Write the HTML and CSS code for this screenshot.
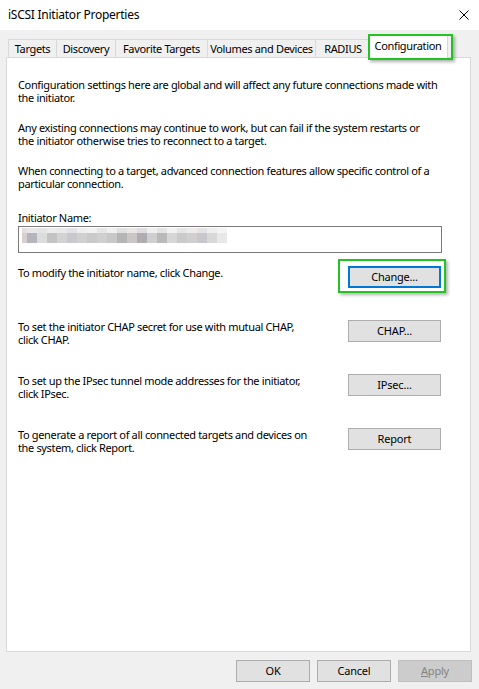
FILE: index.html
```html
<!DOCTYPE html>
<html lang="en">
<head>
<meta charset="utf-8">
<title>iSCSI Initiator Properties</title>
<link rel="stylesheet" href="styles.css">
</head>
<body>
<div class="window">
  <div class="titlebar">
    <span class="title">iSCSI Initiator Properties</span>
    <svg class="close" width="10" height="10" viewBox="0 0 10 10"><path d="M0.5 0.5 L9.5 9.5 M9.5 0.5 L0.5 9.5" stroke="#000" stroke-width="1" fill="none"/></svg>
  </div>
  <div class="tabs">
    <div class="tab tab-targets">Targets</div>
    <div class="tab tab-discovery">Discovery</div>
    <div class="tab tab-favorite">Favorite Targets</div>
    <div class="tab tab-volumes">Volumes and Devices</div>
    <div class="tab tab-radius">RADIUS</div>
    <div class="tab tab-config active">Configuration</div>
  </div>
  <div class="panel">
    <p class="para">Configuration settings here are global and will affect any future connections made with<br>the initiator.</p>
    <p class="para">Any existing connections may continue to work, but can fail if the system restarts or<br>the initiator otherwise tries to reconnect to a target.</p>
    <p class="para">When connecting to a target, advanced connection features allow specific control of a<br>particular connection.</p>
    <div class="label">Initiator Name:</div>
    <div class="namebox"><div class="blur"><div class="blur-top"></div><div class="blur-bottom"></div></div></div>
    <div class="row row-first">
      <p class="row-text">To modify the initiator name, click Change.</p>
      <button class="btn btn-default">Change...</button>
    </div>
    <div class="row">
      <p class="row-text">To set the initiator CHAP secret for use with mutual CHAP,<br>click CHAP.</p>
      <button class="btn">CHAP...</button>
    </div>
    <div class="row">
      <p class="row-text">To set up the IPsec tunnel mode addresses for the initiator,<br>click IPsec.</p>
      <button class="btn">IPsec...</button>
    </div>
    <div class="row">
      <p class="row-text">To generate a report of all connected targets and devices on<br>the system, click Report.</p>
      <button class="btn">Report</button>
    </div>
  </div>
  <div class="footer">
    <button class="btn btn-small">OK</button>
    <button class="btn btn-small">Cancel</button>
    <button class="btn btn-small btn-disabled"><u>A</u>pply</button>
  </div>
  <div class="highlight highlight-tab"></div>
  <div class="highlight highlight-change"></div>
</div>
</body>
</html>
```

FILE: styles.css
```css
* { box-sizing: border-box; }
html, body { margin: 0; padding: 0; }
body {
  width: 479px;
  height: 689px;
  background: #f0f0f0;
  font-family: "Noto Sans", "Open Sans", sans-serif;
  font-size: 11px;
  letter-spacing: -0.35px;
  color: #000;
  overflow: hidden;
}
.window {
  position: relative;
  width: 479px;
  height: 689px;
}
.titlebar {
  height: 30px;
  background: #fff;
  display: flex;
  align-items: center;
  justify-content: space-between;
  padding: 0 10px 0 8px;
}
.title { font-size: 12px; line-height: 16px; letter-spacing: -0.25px; }
.close { display: block; }

.tabs {
  display: flex;
  align-items: flex-end;
  height: 27px;
  padding-left: 8px;
  padding-top: 5px;
}
.tab {
  height: 18px;
  border: 1px solid #d9d9d9;
  border-bottom: none;
  border-right: none;
  background: #f0f0f0;
  display: flex;
  align-items: center;
  justify-content: center;
  line-height: 16px;
  white-space: nowrap;
}
.tab-targets { width: 48px; }
.tab-discovery { width: 59px; }
.tab-favorite { width: 92px; }
.tab-volumes { width: 108px; }
.tab-radius { width: 55px; }
.tab-config { width: 76px; }
.tab.active {
  position: relative;
  z-index: 1;
  height: 24px;
  margin: 0 -2px -1px -2px;
  width: 80px;
  background: #fff;
  border-right: 1px solid #d9d9d9;
  padding-bottom: 1px;
}

.panel {
  margin-left: 6px;
  width: 465px;
  height: 595px;
  background: #fff;
  border: 1px solid #d9d9d9;
  padding: 20px 0 0 11px;
}
.para {
  margin: 0 0 17px 0;
  line-height: 13px;
  white-space: nowrap;
}
.label {
  margin-top: 21px;
  line-height: 13px;
}
.namebox {
  margin-top: 2px;
  width: 424px;
  height: 27px;
  border: 1px solid #7a7a7a;
  background: #fff;
  padding: 1px 0 0 3px;
}
.blur { width: 205px; }
.blur-top {
  height: 5px;
  background: linear-gradient(to right,
    #e6dede 0 5px, #e8e8ec 5px 15px, #e4e4e4 15px 25px, #ececec 25px 35px, #e9e9e9 35px 45px,
    #e2e2e6 45px 55px, #eeeeee 55px 65px, #f2f2f2 65px 75px, #e6e6e6 75px 85px, #f0f0f0 85px 95px,
    #e1e1e1 95px 105px, #ebe6e6 105px 115px, #dedee2 115px 125px, #efefef 125px 135px, #e4e4e4 135px 145px,
    #f2f2f2 145px 155px, #e6e6e6 155px 165px, #f1eaea 165px 175px, #e3e3e8 175px 185px, #eeeeee 185px 195px, #f4f4f4 195px 205px);
}
.blur-bottom {
  height: 10px;
  background: linear-gradient(to right,
    #d8cfcf 0 5px, #b5b5bd 5px 15px, #dcdcdc 15px 25px, #c4c4c4 25px 35px, #d3d3d3 35px 45px,
    #c8c8cd 45px 55px, #d0d0d0 55px 65px, #c9c9c9 65px 75px, #cfcfcf 75px 85px, #c8c8c8 85px 95px,
    #b5b5b5 95px 105px, #cbc6c6 105px 115px, #aeaeb2 115px 125px, #cfcfcf 125px 135px, #b9b9b9 135px 145px,
    #d6d6d6 145px 155px, #cacaca 155px 165px, #cfcfcf 165px 175px, #c7c7cc 175px 185px, #d8d8d8 185px 195px, #e8e8e8 195px 205px);
}

.row {
  display: flex;
  align-items: flex-start;
  justify-content: space-between;
  width: 423px;
  min-height: 26px;
  margin-top: 28px;
}
.row-first { margin-top: 13px; }
.row-text {
  margin: 0;
  line-height: 13px;
  white-space: nowrap;
}
.btn {
  font-family: inherit;
  font-size: 11px;
  letter-spacing: -0.2px;
  color: #000;
  background: #e1e1e1;
  border: 1px solid #adadad;
  width: 93px;
  height: 22px;
  padding: 0;
  margin: 0;
  line-height: 16px;
  border-radius: 0;
}
.btn-default {
  border: 2px solid #0078d7;
}

.footer {
  display: flex;
  justify-content: flex-end;
  gap: 7px;
  padding: 8px 7px 0 0;
}
.btn-small { width: 74px; }
.btn-disabled {
  background: #cccccc;
  border-color: #bfbfbf;
  color: #838383;
}
.btn-disabled u { text-decoration: underline; }

.highlight {
  position: absolute;
  border: 2px solid #22c322;
  box-shadow: 2px 2px 3px rgba(0, 0, 0, 0.3);
  pointer-events: none;
  z-index: 2;
}
.highlight-tab {
  left: 368px;
  top: 34px;
  width: 85px;
  height: 26px;
}
.highlight-change {
  left: 338px;
  top: 259px;
  width: 108px;
  height: 34px;
}
```
